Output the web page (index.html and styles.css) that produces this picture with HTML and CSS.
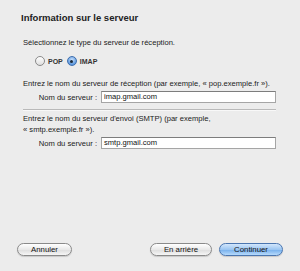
FILE: index.html
```html
<!DOCTYPE html>
<html lang="fr">
<head>
    <meta charset="UTF-8">
    <title>Information sur le serveur</title>
    <link rel="stylesheet" href="styles.css">
</head>
<body>
    <div class="window">
        <h2 class="title">Information sur le serveur</h2>

        <p class="text first">Sélectionnez le type du serveur de réception.</p>
        <div class="radios">
            <span class="radio"></span><span class="radio-label">POP</span>
            <span class="radio checked"></span><span class="radio-label">IMAP</span>
        </div>

        <p class="text">Entrez le nom du serveur de réception (par exemple, « pop.exemple.fr »).</p>
        <div class="field">
            <span class="field-label">Nom du serveur :</span>
            <div class="input">imap.gmail.com</div>
        </div>

        <div class="separator"></div>

        <p class="text">Entrez le nom du serveur d'envoi (SMTP) (par exemple,<br>« smtp.exemple.fr »).</p>
        <div class="field">
            <span class="field-label">Nom du serveur :</span>
            <div class="input">smtp.gmail.com</div>
        </div>

        <div class="buttons">
            <button class="btn cancel">Annuler</button>
            <div class="spacer"></div>
            <button class="btn back">En arrière</button>
            <button class="btn primary">Continuer</button>
        </div>
    </div>
</body>
</html>
```

FILE: styles.css
```css
body { margin: 0; background: #ececec; font-family: "Liberation Sans", Arial, sans-serif; color: #1a1a1a; }
.window { height: 271px; box-sizing: border-box; padding: 12px 24px 15px 23px; display: flex; flex-direction: column; }
.title { margin: 0 0 0 -2px; font-size: 9.5px; font-weight: bold; color: #222; line-height: 12px; }
.text { margin: 0; font-size: 7.6px; line-height: 11px; }
.text.first { margin-top: 13px; }
.radios { display: flex; align-items: center; margin: 8px 0 12px 12px; height: 10px; }
.radio { width: 8px; height: 8px; border-radius: 50%; border: 1px solid #8a8a8a; background: linear-gradient(#ffffff, #dedede); box-sizing: content-box; position: relative; }
.radio.checked { border-color: #3f6fae; background: radial-gradient(circle at 50% 35%, #c9e0fb, #5d98dd 70%); }
.radio.checked::after { content: ""; position: absolute; left: 2.5px; top: 2.5px; width: 3px; height: 3px; border-radius: 50%; background: #1c2a3a; }
.radio-label { font-size: 7px; font-weight: bold; margin: 0 4px 0 3px; color: #333; }
.field { display: flex; align-items: center; margin-top: 2px; }
.field-label { width: 74px; text-align: right; font-size: 7.6px; margin-right: 4px; }
.input { width: 169px; height: 10px; line-height: 10px; padding: 0 2px; background: #fff; border: 1px solid #a5a5a5; border-top-color: #7d7d7d; font-size: 7.6px; color: #111; }
.separator { margin: 6px 0 2px 0; height: 1px; background: #b9b9b9; border-bottom: 1px solid #f8f8f8; width: 253px; }
.buttons { margin-top: auto; display: flex; align-items: center; margin-left: -6px; width: 266px; }
.spacer { flex: 1; }
.btn { height: 13px; padding: 0; border: 1px solid #8a8a8a; border-radius: 7px; background: linear-gradient(#ffffff, #e9e9e9 50%, #dcdcdc 51%, #f6f6f6); font-family: "Liberation Sans", Arial, sans-serif; font-size: 7.8px; color: #111; line-height: 11px; box-shadow: 0 1px 1px rgba(0,0,0,0.15); }
.cancel { width: 55px; }
.back { width: 62px; margin-right: 7px; }
.primary { width: 64px; border-color: #4b76b0; background: linear-gradient(#d2e6fb, #9cc6f2 50%, #74aeec 51%, #b6dafc); }
```
